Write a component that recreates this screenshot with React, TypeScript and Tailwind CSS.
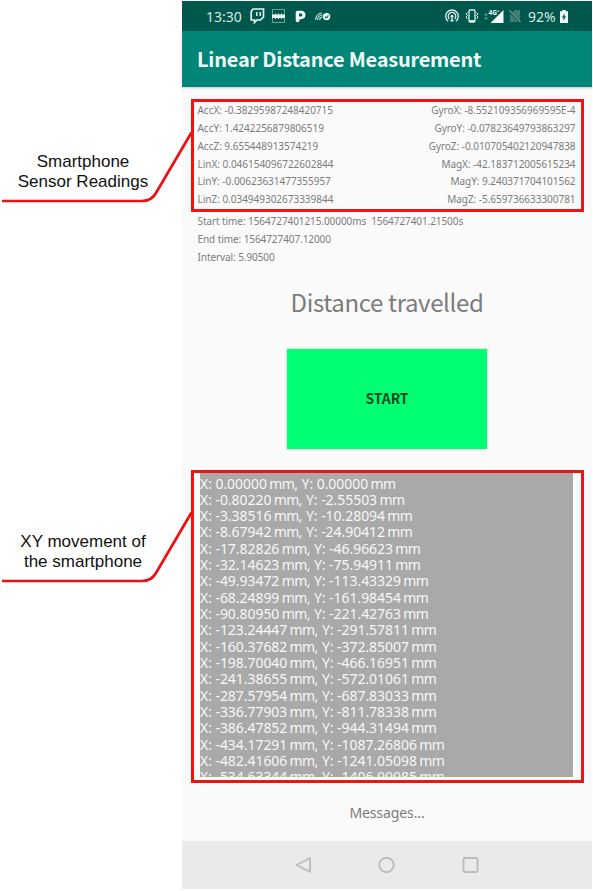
import React from "react";

const leftReadings = [
  "AccX: -0.38295987248420715",
  "AccY: 1.4242256879806519",
  "AccZ: 9.655448913574219",
  "LinX: 0.046154096722602844",
  "LinY: -0.00623631477355957",
  "LinZ: 0.034949302673339844",
];

const rightReadings = [
  "GyroX: -8.552109356969595E-4",
  "GyroY: -0.07823649793863297",
  "GyroZ: -0.010705402120947838",
  "MagX: -42.183712005615234",
  "MagY: 9.240371704101562",
  "MagZ: -5.659736633300781",
];

const movement = [
  ["0.00000", "0.00000"],
  ["-0.80220", "-2.55503"],
  ["-3.38516", "-10.28094"],
  ["-8.67942", "-24.90412"],
  ["-17.82826", "-46.96623"],
  ["-32.14623", "-75.94911"],
  ["-49.93472", "-113.43329"],
  ["-68.24899", "-161.98454"],
  ["-90.80950", "-221.42763"],
  ["-123.24447", "-291.57811"],
  ["-160.37682", "-372.85007"],
  ["-198.70040", "-466.16951"],
  ["-241.38655", "-572.01061"],
  ["-287.57954", "-687.83033"],
  ["-336.77903", "-811.78338"],
  ["-386.47852", "-944.31494"],
  ["-434.17291", "-1087.26806"],
  ["-482.41606", "-1241.05098"],
  ["-534.63344", "-1406.99985"],
];

function Callout({ lines, className }: { lines: string[]; className: string }) {
  return (
    <div className={`relative h-[72px] w-full ${className}`}>
      <p className="w-[166px] pt-[21px] text-center font-['Liberation_Sans',Arial,sans-serif] text-[17px] leading-5 text-[#111]">
        {lines.map((line) => (
          <span key={line} className="block whitespace-nowrap">{line}</span>
        ))}
      </p>
      <svg className="absolute left-0 top-0 z-10 overflow-visible" width="192" height="72" fill="none" stroke="#ea1212" strokeWidth="2.7">
        <path d="M2 70H142Q151.500 70 156 62L191.500 1.500" />
      </svg>
    </div>
  );
}

function StatusBar() {
  return (
    <div className="flex h-[30px] items-center bg-[#00574b] pl-[24px] pr-[24px] text-[14px] text-[#d5e8e4]">
      <span className="w-[37px] whitespace-nowrap">13:30</span>
      <svg className="ml-[7px]" width="15" height="16" viewBox="0 0 15 16" fill="none" stroke="#e8f6f3" strokeWidth="1.7">
        <path d="M3 1H13.500V9L10.500 12H7L4.500 14.500V12H1.200V3.500Z" />
        <path d="M6.800 4V8M10.200 4V8" strokeWidth="1.400" />
      </svg>
      <svg className="ml-[7px]" width="13" height="14" viewBox="0 0 13 14">
        <rect x=".5" y=".5" width="12" height="13" fill="none" stroke="#6f9f96" />
        <path d="M0 5.500H3V4.500H4V5.500H6V4.500H7V5.500H9V4.500H10V5.500H13V9H10V10H9V9H7V10H6V9H4V10H3V9H0Z" fill="#f2fbf9" />
      </svg>
      <svg className="ml-[10px]" width="11" height="13" viewBox="0 0 11 13">
        <path fillRule="evenodd" d="M.7 2.500Q.7.800 2.500.8H6C9 .8 10.500 2.800 10.500 5S9 9.200 6 9.200H4.500V10.500Q4.500 12.300 2.600 12.300T.7 10.500ZM4 3.600V6.400H6Q7.300 6.400 7.300 5T6 3.600Z" fill="#f2fbf9" />
      </svg>
      <svg className="ml-[9px]" width="16" height="9" viewBox="0 0 16 9">
        <path d="M.5 8C1 4 3.500 1.200 7 1M2.500 8C3 5 5 3 7.500 3M4.500 8C5 6 6 5 7.500 5" fill="none" stroke="#c4dfd9" strokeWidth="1.100" />
        <circle cx="11.600" cy="4.600" r="3.700" fill="#eff9f7" />
        <path d="M9.800 4.700L11.200 6L13.500 3.400" fill="none" stroke="#00574b" strokeWidth="1.100" />
      </svg>
      <div className="ml-auto flex items-center">
        <svg width="14" height="14" viewBox="0 0 14 14" fill="none" stroke="#d9ece8" strokeWidth="1.300">
          <path d="M3.200 12.300A6.300 6.300 0 1 1 10.800 12.300M4.400 10A3.800 3.800 0 1 1 9.600 10" />
          <circle cx="7" cy="7.300" r="1.500" fill="#d9ece8" stroke="none" />
          <path d="M7 8L5.300 12.500H8.700Z" fill="#d9ece8" stroke="none" />
        </svg>
        <svg className="ml-[6px]" width="14" height="14" viewBox="0 0 14 14" fill="none" stroke="#d9ece8">
          <rect x="4" y="1" width="6" height="12" rx="1" strokeWidth="1.300" />
          <path d="M4 12H10" strokeWidth="2" />
          <path d="M2.500 3.500L1 5L2.500 6.500L1 8L2.500 10M11.500 3.500L13 5L11.500 6.500L13 8L11.500 10" />
        </svg>
        <svg className="ml-[5px] overflow-visible" width="20" height="15" viewBox="0 0 20 15">
          <path d="M0 6.500L2 4L4 6.500ZM0 8.500L2 11L4 8.500Z" fill="#6b9c93" />
          <path d="M19.500 1V14H6.500Z" fill="#f5fcfb" />
          <text x="4.500" y="6" fontSize="6.500" fontWeight="700" fill="#f5fcfb" stroke="#00574b" strokeWidth=".8" paintOrder="stroke" fontFamily="Noto Sans, sans-serif">4G⁺</text>
        </svg>
        <svg className="ml-[5px] mr-px" width="12" height="14" viewBox="0 0 12 14">
          <path d="M11 1V11L3.500 3.500L6 1ZM1 4.500L9.500 13H1Z" fill="#3f7c71" />
          <path d="M.3 1.200L11.500 13" stroke="#6b9c93" strokeWidth="1.200" />
        </svg>
        <span className="ml-[6px] w-[29px] whitespace-nowrap">92%</span>
        <svg className="ml-[3px]" width="8" height="13" viewBox="0 0 7 13" preserveAspectRatio="none">
          <path d="M2 0H5V1.300H7V13H0V1.300H2Z" fill="#f0faf8" />
          <path d="M4.500 3L1.500 7.500H3.200L2.600 11L5.500 6.500H3.800Z" fill="#00574b" />
        </svg>
      </div>
    </div>
  );
}

export default function App() {
  return (
    <div className="flex h-[891px] w-[593px] overflow-hidden bg-white">
      <aside className="flex w-[182px] shrink-0 flex-col pt-[131px]">
        <Callout lines={["Smartphone", "Sensor Readings"]} className="" />
        <Callout lines={["XY movement of", "the smartphone"]} className="mt-[308px]" />
      </aside>
      <main className="mt-px flex h-[888px] w-[410px] flex-col bg-[#fafafa] font-['Noto_Sans',sans-serif] text-[#7c7c7c]">
        <StatusBar />
        <header className="flex h-14 items-center bg-[#008577] pl-[15px] font-['Noto_Sans_CJK_SC',sans-serif] text-[20px] font-bold tracking-[-0.23px] text-[#f1fcfa] shadow-[0_1px_2px_rgba(0,0,0,0.2)]">
          <h1 className="whitespace-nowrap">Linear Distance Measurement</h1>
        </header>
        <section className="ml-[9px] mt-[12px] flex h-[113px] w-[393px] justify-between border-[3px] border-[#ee1414] pl-[3.5px] pr-[5.5px] text-[10px] leading-[17.85px]">
          <div className="tracking-[-0.02px]">{leftReadings.map((r) => <p key={r} className="whitespace-nowrap">{r}</p>)}</div>
          <div className="text-right tracking-[-0.04px]">{rightReadings.map((r) => <p key={r} className="whitespace-nowrap">{r}</p>)}</div>
        </section>
        <section className="h-[54px] pl-[15.5px] pt-px text-[10px] leading-[17.9px] tracking-[-0.08px]">
          <p className="whitespace-pre">Start time: 1564727401215.00000ms  1564727401.21500s</p>
          <p>End time: 1564727407.12000</p>
          <p>Interval: 5.90500</p>
        </section>
        <h2 className="mt-[20px] h-[34px] text-center font-['Noto_Sans_CJK_SC',sans-serif] text-[24px] leading-[32px] tracking-[-0.37px]">Distance travelled</h2>
        <button className="ml-[105px] mt-[29px] h-[100px] w-[200px] bg-[#00ff73] pb-px font-['Noto_Sans_CJK_SC',sans-serif] text-[14px] font-bold tracking-[-0.1px] text-[#0b4a1c] shadow-[0_0_2px_rgba(0,0,0,0.25)]">START</button>
        <section className="ml-[9px] mt-[21px] h-[313px] w-[393px] border-[3px] border-[#ee1414] pl-[6px]">
          <div className="h-[304px] w-[373px] overflow-hidden bg-[#a9a9a9] pt-[2.5px] text-[14px] leading-[16.33px] tracking-[-0.05px] text-[#f7f7f7]">
            {movement.map(([x, y]) => (
              <p key={x} className="whitespace-nowrap">
                {`X: ${x}`}
                <span className="tracking-[-0.6px] [word-spacing:-0.7px]">{" mm"}</span>
                {`, Y: ${y}`}
                <span className="tracking-[-0.6px] [word-spacing:-0.7px]">{" mm"}</span>
              </p>
            ))}
          </div>
        </section>
        <p className="mt-[18px] h-6 text-center text-[14px] leading-6 tracking-[-0.1px]">Messages...</p>
        <nav className="mt-auto flex h-[48px] items-center bg-[#eaeaea] pl-[113px]">
          <svg width="190" height="18" viewBox="0 0 190 18" fill="none" stroke="#bdbdbd" strokeWidth="1.900" strokeLinejoin="round">
            <path d="M15 2V16L1.500 9Z" />
            <circle cx="91.500" cy="9" r="7.200" />
            <rect x="168.500" y="2" width="14" height="14" rx="1.500" />
          </svg>
        </nav>
      </main>
    </div>
  );
}
